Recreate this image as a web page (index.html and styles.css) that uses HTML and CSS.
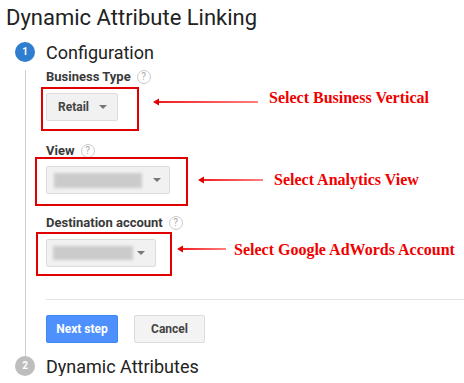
FILE: index.html
```html
<!DOCTYPE html>
<html lang="en">
<head>
    <meta charset="UTF-8">
    <title>Dynamic Attribute Linking</title>
    <link rel="stylesheet" href="styles.css">
</head>
<body>

    <h1 class="page-title">Dynamic Attribute Linking</h1>

    <div class="stepper">
        <div class="step-head">
            <span class="step-num active">1</span>
            <span class="step-title">Configuration</span>
        </div>

        <div class="step-body">
            <!-- Business type -->
            <div class="field-label label-type">Business Type <span class="help">?</span></div>
            <div class="field-row">
                <div class="callout callout-type">
                    <div class="select select-type">
                        <span class="select-value">Retail</span>
                        <span class="caret"></span>
                    </div>
                </div>
                <svg class="pointer pointer-type" width="105" height="8" viewBox="0 0 105 8">
                    <defs>
                        <linearGradient id="fadeA" x1="0" x2="1" y1="0" y2="0">
                            <stop offset="0" stop-color="#f01c1c"/>
                            <stop offset="1" stop-color="#ff8080"/>
                        </linearGradient>
                    </defs>
                    <rect x="4" y="3" width="101" height="2" fill="url(#fadeA)"/>
                    <polygon points="0,4 6,0.5 6,7.5" fill="#e00000"/>
                </svg>
                <span class="note note-type">Select Business Vertical</span>
            </div>

            <!-- View -->
            <div class="field-label label-view">View <span class="help">?</span></div>
            <div class="field-row">
                <div class="callout callout-view">
                    <div class="select select-view">
                        <span class="blurred blurred-view"></span>
                        <span class="caret"></span>
                    </div>
                </div>
                <svg class="pointer pointer-view" width="65" height="8" viewBox="0 0 65 8">
                    <defs>
                        <linearGradient id="fadeB" x1="0" x2="1" y1="0" y2="0">
                            <stop offset="0" stop-color="#f01c1c"/>
                            <stop offset="1" stop-color="#ff8080"/>
                        </linearGradient>
                    </defs>
                    <rect x="4" y="3" width="61" height="2" fill="url(#fadeB)"/>
                    <polygon points="0,4 6,0.5 6,7.5" fill="#e00000"/>
                </svg>
                <span class="note note-view">Select Analytics View</span>
            </div>

            <!-- Destination account -->
            <div class="field-label label-dest">Destination account <span class="help">?</span></div>
            <div class="field-row">
                <div class="callout callout-dest">
                    <div class="select select-dest">
                        <span class="blurred blurred-dest"></span>
                        <span class="caret"></span>
                    </div>
                </div>
                <svg class="pointer pointer-dest" width="49" height="8" viewBox="0 0 49 8">
                    <defs>
                        <linearGradient id="fadeC" x1="0" x2="1" y1="0" y2="0">
                            <stop offset="0" stop-color="#f01c1c"/>
                            <stop offset="1" stop-color="#ff8080"/>
                        </linearGradient>
                    </defs>
                    <rect x="4" y="3" width="45" height="2" fill="url(#fadeC)"/>
                    <polygon points="0,4 6,0.5 6,7.5" fill="#e00000"/>
                </svg>
                <span class="note note-dest">Select Google AdWords Account</span>
            </div>

            <div class="divider"></div>

            <div class="actions">
                <button class="btn btn-primary">Next step</button>
                <button class="btn btn-cancel">Cancel</button>
            </div>
        </div>

        <div class="step-head">
            <span class="step-num">2</span>
            <span class="step-title">Dynamic Attributes</span>
        </div>
    </div>

</body>
</html>
```

FILE: styles.css
```css
body {
    margin: 0;
    font-family: Roboto, "Liberation Sans", Arial, sans-serif;
    color: #222;
    background: #fff;
}

.page-title {
    margin: 0;
    padding: 5px 0 0 6px;
    font-size: 22px;
    font-weight: 400;
    line-height: 26px;
    color: #222;
}

.stepper {
    margin-top: 11px;
}

.step-head {
    display: flex;
    align-items: flex-start;
    gap: 11px;
    margin-left: 15px;
    height: 20px;
}

.step-num {
    width: 20px;
    height: 20px;
    border-radius: 50%;
    background-color: #bdbdbd;
    color: #fff;
    font-size: 10px;
    font-weight: 700;
    line-height: 20px;
    text-align: center;
}

.step-num.active {
    background-color: #2f7dcf;
}

.step-title {
    margin-top: 1px;
    font-size: 18px;
    line-height: 20px;
    color: #222;
}

.step-body {
    margin-left: 25px;
    border-left: 1px solid #cfcfcf;
    padding: 0 0 13px 20px;
}

.field-label {
    display: flex;
    align-items: center;
    gap: 6px;
    height: 14px;
    font-size: 13px;
    font-weight: 700;
    line-height: 14px;
    color: #3a3a3a;
}

.label-type { margin-top: 8px; }
.label-view { margin-top: 13px; }
.label-dest { margin-top: 10px; }

.help {
    box-sizing: border-box;
    width: 14px;
    height: 14px;
    border: 1px solid #cbcbcb;
    border-radius: 50%;
    font-size: 10px;
    font-weight: 400;
    line-height: 12px;
    text-align: center;
    color: #aaa;
}

.field-row {
    display: flex;
    align-items: flex-start;
}

.callout {
    border: 2px solid #e00000;
}

.callout-type {
    margin: 3px 0 0 -5px;
    padding: 4px 19px 8px 3px;
}

.callout-view {
    margin: -1px 0 0 -11px;
    padding: 7px 16px 10px 9px;
}

.callout-dest {
    margin: 2px 0 0 -10px;
    padding: 5px 14px 7px 8px;
}

.select {
    box-sizing: border-box;
    display: flex;
    align-items: center;
    justify-content: space-between;
    height: 28px;
    background-color: #f1f1f1;
    border: 1px solid #dcdcdc;
    border-radius: 2px;
}

.select-type {
    width: 72px;
    padding: 0 10px 0 11px;
}

.select-view {
    width: 124px;
    padding: 0 8px 0 7px;
}

.select-dest {
    width: 110px;
    padding: 0 10px 0 6px;
}

.select-value {
    font-size: 12px;
    font-weight: 700;
    color: #444;
}

.caret {
    width: 0;
    height: 0;
    border-left: 4px solid transparent;
    border-right: 4px solid transparent;
    border-top: 4px solid #777;
}

.blurred {
    background-color: #cbcbcb;
    filter: blur(1.5px);
}

.blurred-view {
    width: 88px;
    height: 15px;
}

.blurred-dest {
    width: 80px;
    height: 14px;
}

.pointer {
    flex: none;
}

.pointer-type { margin: 14px 0 0 14px; }
.pointer-view { margin: 18px 0 0 10px; }
.pointer-dest { margin: 15px 0 0 5px; }

.note {
    font-family: "Liberation Serif", "Times New Roman", serif;
    font-size: 16px;
    font-weight: 700;
    line-height: 16px;
    color: #f00000;
    white-space: nowrap;
}

.note-type { margin: 6px 0 0 11px; }
.note-view { margin: 14px 0 0 11px; }
.note-dest { margin: 12px 0 0 8px; }

.divider {
    margin-top: 23px;
    height: 1px;
    background-color: #e2e2e2;
}

.actions {
    display: flex;
    gap: 16px;
    margin-top: 15px;
}

.btn {
    height: 28px;
    border-radius: 2px;
    font-family: Roboto, "Liberation Sans", Arial, sans-serif;
    font-size: 12px;
    font-weight: 700;
    padding: 0;
    cursor: pointer;
}

.btn-primary {
    width: 72px;
    background-color: #4d90fe;
    border: 1px solid #3f86f5;
    color: #fff;
}

.btn-cancel {
    width: 71px;
    background-color: #f3f3f3;
    border: 1px solid #dcdcdc;
    color: #444;
}
```
